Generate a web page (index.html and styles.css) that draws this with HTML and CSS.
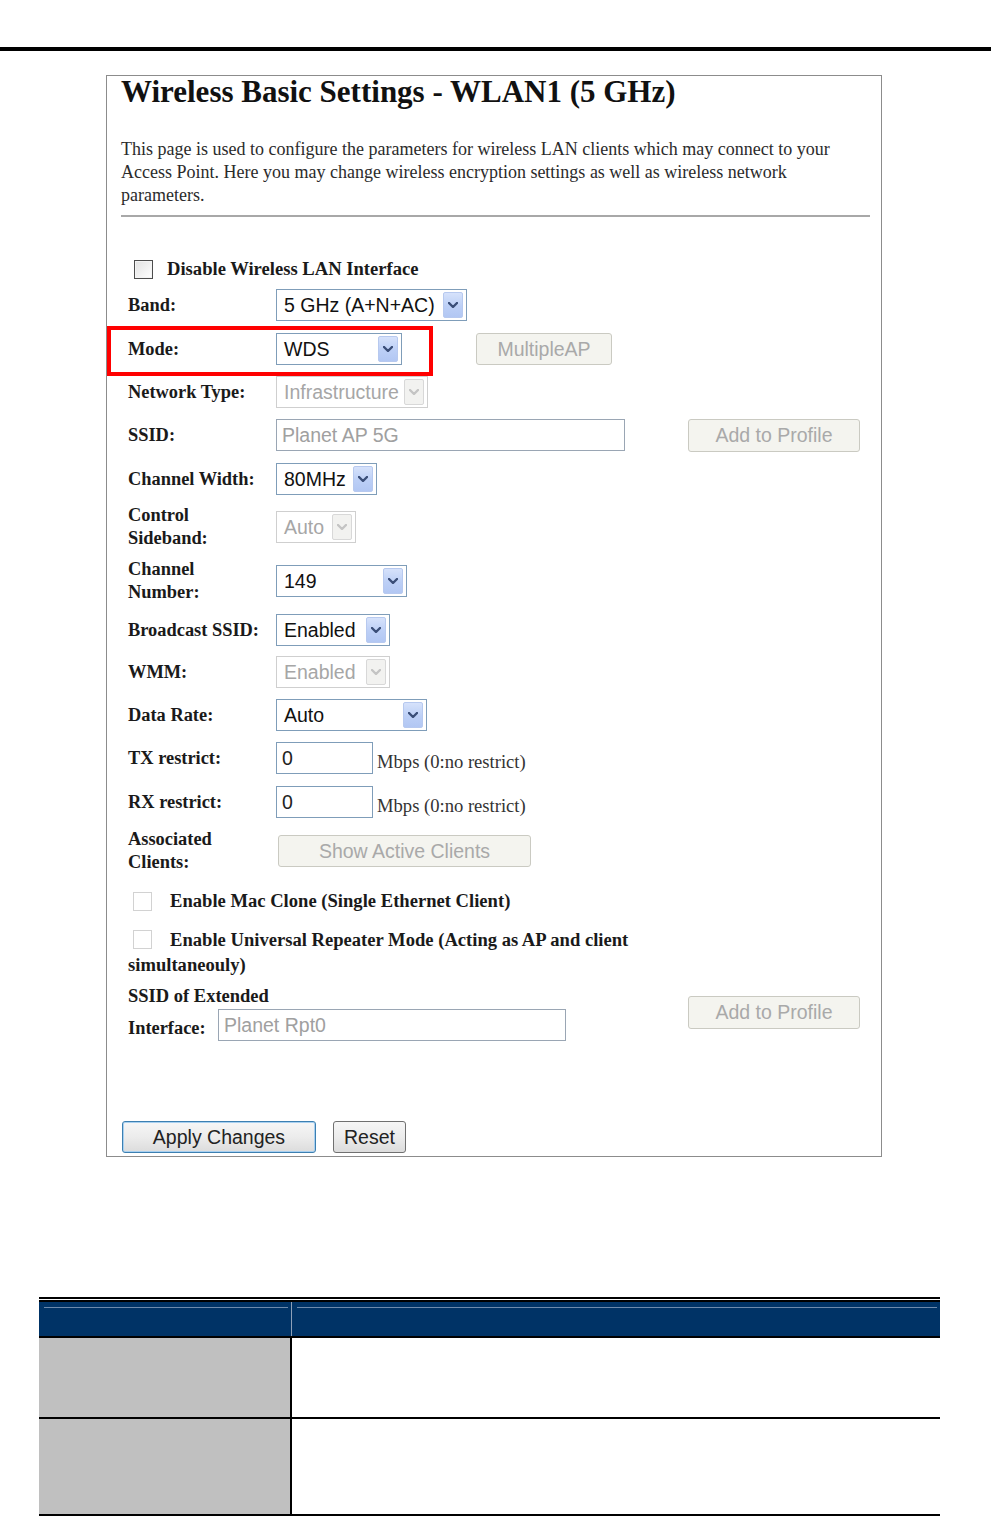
FILE: index.html
```html
<!DOCTYPE html>
<html>
<head>
<meta charset="utf-8">
<link rel="stylesheet" href="styles.css">
</head>
<body>
<div class="top-rule"></div>

<div class="shot">
  <h1 class="title">Wireless Basic Settings - WLAN1 (5 GHz)</h1>
  <p class="intro">This page is used to configure the parameters for wireless LAN clients which may connect to your<br>Access Point. Here you may change wireless encryption settings as well as wireless network<br>parameters.</p>
  <hr class="rule">

  <div class="form">
    <div class="check-row">
      <span class="cb cb-dark"></span>
      <span class="check-label">Disable Wireless LAN Interface</span>
    </div>

    <div class="row h44">
      <div class="lbl">Band:</div>
      <div class="ctl">
        <div class="sel w-band"><span class="sel-text">5 GHz (A+N+AC)</span><span class="sel-btn"><svg viewBox="0 0 10 6" class="chev"><path d="M1 1 L5 5 L9 1"/></svg></span></div>
      </div>
    </div>

    <div class="row h44 mode-row">
      <div class="lbl">Mode:</div>
      <div class="ctl">
        <div class="sel w-mode"><span class="sel-text">WDS</span><span class="sel-btn"><svg viewBox="0 0 10 6" class="chev"><path d="M1 1 L5 5 L9 1"/></svg></span></div>
        <span class="btn btn-off w-multi">MultipleAP</span>
      </div>
      <div class="highlight"></div>
    </div>

    <div class="row h42">
      <div class="lbl">Network Type:</div>
      <div class="ctl">
        <div class="sel sel-off w-net"><span class="sel-text">Infrastructure</span><span class="sel-btn"><svg viewBox="0 0 10 6" class="chev"><path d="M1 1 L5 5 L9 1"/></svg></span></div>
      </div>
    </div>

    <div class="row h44">
      <div class="lbl">SSID:</div>
      <div class="ctl">
        <div class="inp inp-grey w-ssid">Planet AP 5G</div>
      </div>
      <div class="side"><span class="btn btn-off w-add">Add to Profile</span></div>
    </div>

    <div class="row h44">
      <div class="lbl">Channel Width:</div>
      <div class="ctl">
        <div class="sel w-cw"><span class="sel-text">80MHz</span><span class="sel-btn"><svg viewBox="0 0 10 6" class="chev"><path d="M1 1 L5 5 L9 1"/></svg></span></div>
      </div>
    </div>

    <div class="row h52">
      <div class="lbl two">Control<br>Sideband:</div>
      <div class="ctl">
        <div class="sel sel-off w-sb"><span class="sel-text">Auto</span><span class="sel-btn"><svg viewBox="0 0 10 6" class="chev"><path d="M1 1 L5 5 L9 1"/></svg></span></div>
      </div>
    </div>

    <div class="row h56">
      <div class="lbl two">Channel<br>Number:</div>
      <div class="ctl">
        <div class="sel w-cn"><span class="sel-text">149</span><span class="sel-btn"><svg viewBox="0 0 10 6" class="chev"><path d="M1 1 L5 5 L9 1"/></svg></span></div>
      </div>
    </div>

    <div class="row h42">
      <div class="lbl">Broadcast SSID:</div>
      <div class="ctl">
        <div class="sel w-bc"><span class="sel-text">Enabled</span><span class="sel-btn"><svg viewBox="0 0 10 6" class="chev"><path d="M1 1 L5 5 L9 1"/></svg></span></div>
      </div>
    </div>

    <div class="row h42">
      <div class="lbl">WMM:</div>
      <div class="ctl">
        <div class="sel sel-off w-bc"><span class="sel-text">Enabled</span><span class="sel-btn"><svg viewBox="0 0 10 6" class="chev"><path d="M1 1 L5 5 L9 1"/></svg></span></div>
      </div>
    </div>

    <div class="row h44">
      <div class="lbl">Data Rate:</div>
      <div class="ctl">
        <div class="sel w-dr"><span class="sel-text">Auto</span><span class="sel-btn"><svg viewBox="0 0 10 6" class="chev"><path d="M1 1 L5 5 L9 1"/></svg></span></div>
      </div>
    </div>

    <div class="row h42">
      <div class="lbl">TX restrict:</div>
      <div class="ctl ctl-unit">
        <div class="inp w-tx">0</div>
        <span class="unit">Mbps (0:no restrict)</span>
      </div>
    </div>

    <div class="row h46">
      <div class="lbl">RX restrict:</div>
      <div class="ctl ctl-unit">
        <div class="inp w-tx">0</div>
        <span class="unit">Mbps (0:no restrict)</span>
      </div>
    </div>

    <div class="row h52">
      <div class="lbl two">Associated<br>Clients:</div>
      <div class="ctl">
        <span class="btn btn-off w-show">Show Active Clients</span>
      </div>
    </div>

    <div class="check-row mac-row">
      <span class="cb cb-light"></span>
      <span class="check-label">Enable Mac Clone (Single Ethernet Client)</span>
    </div>

    <div class="repeater">
      <span class="cb cb-light cb-inline"></span><span class="check-label">Enable Universal Repeater Mode (Acting as AP and client</span><br><span class="check-label">simultaneouly)</span>
    </div>

    <div class="ext-row">
      <div class="ext-left">
        <div class="ext-title">SSID of Extended</div>
        <div class="ext-line">
          <span class="lbl-inline">Interface:</span>
          <div class="inp inp-grey w-ext">Planet Rpt0</div>
        </div>
      </div>
      <div class="side ext-side"><span class="btn btn-off w-add">Add to Profile</span></div>
    </div>
  </div>

  <div class="actions">
    <span class="btn btn-primary w-apply">Apply Changes</span>
    <span class="btn btn-reset w-reset">Reset</span>
  </div>
</div>

<div class="spec">
  <div class="spec-top"></div>
  <div class="spec-head">
    <div class="hc hc-left"></div>
    <div class="hc hc-right"></div>
  </div>
  <div class="spec-row r1">
    <div class="sc-left"></div>
    <div class="sc-right"></div>
  </div>
  <div class="spec-row r2">
    <div class="sc-left"></div>
    <div class="sc-right"></div>
  </div>
</div>
</body>
</html>
```

FILE: styles.css
```css
html, body {
  margin: 0;
  padding: 0;
  background: #fff;
}

body {
  font-family: "Liberation Serif", "Times New Roman", serif;
  color: #000;
}

.top-rule {
  height: 4px;
  margin-top: 47px;
  background: #000;
}

.shot {
  margin: 24px 0 0 106px;
  width: 776px;
  box-sizing: border-box;
  border: 1px solid #8c8c8c;
  padding: 0 10px 3px 14px;
}

.title {
  margin: 0;
  font-size: 31px;
  line-height: 32px;
  font-weight: bold;
  color: #111;
}

.intro {
  margin: 30px 0 0;
  font-size: 18px;
  line-height: 23px;
  color: #2b2b2b;
}

.rule {
  width: 749px;
  margin: 8px 0 0;
  border: 0;
  border-top: 2px solid #a8a8a8;
  height: 0;
}

.form {
  padding-left: 7px;
}

.check-row {
  display: flex;
  align-items: center;
  height: 34px;
  margin-top: 35px;
}

.cb {
  display: inline-block;
  width: 19px;
  height: 19px;
  box-sizing: border-box;
  flex: none;
}

.cb-dark {
  margin-left: 6px;
  margin-right: 14px;
  border: 1px solid #4d4d4d;
  background: linear-gradient(135deg, #e2e2e2, #ffffff);
  box-shadow: inset 0 0 0 1px #f4f4f4;
}

.cb-light {
  margin-left: 5px;
  margin-right: 18px;
  border: 1px solid #d2d2d2;
  background: #fff;
}

.check-label {
  font-size: 18.6px;
  font-weight: bold;
  color: #1a1a1a;
}

.row {
  position: relative;
  display: grid;
  grid-template-columns: 148px 412px 172px;
  align-items: center;
}

.form > .check-row + .row {
  margin-top: -3px;
}

.h42 { height: 42px; }
.h44 { height: 44px; }
.h46 { height: 46px; }
.h52 { height: 52px; }
.h56 { height: 56px; }

.lbl {
  font-size: 18.4px;
  font-weight: bold;
  color: #1a1a1a;
  line-height: 23px;
}

.ctl {
  display: flex;
  align-items: center;
}

.ctl-unit {
  align-items: flex-end;
}

.unit {
  margin-left: 4px;
  margin-bottom: 1px;
  font-size: 18.6px;
  color: #333;
  line-height: 23px;
}

/* select boxes */
.sel {
  display: flex;
  align-items: center;
  justify-content: space-between;
  height: 32px;
  box-sizing: border-box;
  border: 1px solid #7f9db9;
  padding: 2px 3px 2px 7px;
  background: #fff;
  font-family: "Liberation Sans", Arial, sans-serif;
  font-size: 19.5px;
  color: #111;
  flex: none;
}

.sel-text {
  white-space: nowrap;
}

.sel-btn {
  display: flex;
  align-items: center;
  justify-content: center;
  width: 20px;
  height: 26px;
  box-sizing: border-box;
  border: 1px solid #b7c9ef;
  border-radius: 2px;
  background: linear-gradient(180deg, #d6e2fb 0%, #bccff6 55%, #b2c7f3 100%);
  flex: none;
}

.chev {
  width: 10px;
  height: 6px;
  fill: none;
  stroke: #3a4e78;
  stroke-width: 2.4;
  stroke-linecap: round;
  stroke-linejoin: round;
}

.sel-off {
  border-color: #cfcfcf;
  color: #a6a6a6;
}

.sel-off .sel-btn {
  border-color: #d8d8d8;
  background: #f2f2f0;
}

.sel-off .chev {
  stroke: #c4c4c4;
}

.w-band { width: 191px; }
.w-mode { width: 126px; }
.w-net { width: 152px; }
.w-cw { width: 101px; }
.w-sb { width: 80px; }
.w-cn { width: 131px; }
.w-bc { width: 114px; }
.w-dr { width: 151px; }

/* text inputs */
.inp {
  height: 32px;
  box-sizing: border-box;
  border: 1px solid #7f9db9;
  padding: 0 5px;
  display: flex;
  align-items: center;
  background: #fff;
  font-family: "Liberation Sans", Arial, sans-serif;
  font-size: 19.5px;
  color: #222;
  flex: none;
}

.inp-grey {
  color: #a0a0a0;
  border-color: #9aa6b4;
}

.w-ssid { width: 349px; }
.w-tx { width: 97px; }
.w-ext { width: 348px; }

/* buttons */
.btn {
  display: inline-flex;
  align-items: center;
  justify-content: center;
  height: 32px;
  box-sizing: border-box;
  border-radius: 3px;
  font-family: "Liberation Sans", Arial, sans-serif;
  font-size: 19.5px;
  flex: none;
}

.btn-off {
  border: 1px solid #cacac2;
  background: #f4f4ef;
  color: #a9a9a9;
}

.w-multi { width: 136px; margin-left: 74px; }
.w-add { width: 172px; height: 33px; }
.w-show { width: 253px; margin-left: 2px; }

.side {
  display: flex;
}

.mode-row .highlight {
  position: absolute;
  left: -21px;
  top: -1px;
  width: 326px;
  height: 50px;
  box-sizing: border-box;
  border: 4px solid #ff0000;
  pointer-events: none;
}

.mac-row {
  height: 42px;
  margin-top: 3px;
}

.repeater {
  margin-top: 6px;
  line-height: 24px;
}

.cb-inline {
  vertical-align: -3px;
}

.ext-row {
  display: grid;
  grid-template-columns: 560px 172px;
  margin-top: 6px;
}

.ext-title {
  font-size: 18.5px;
  font-weight: bold;
  color: #1a1a1a;
  line-height: 24px;
}

.ext-line {
  display: flex;
  align-items: center;
  height: 32px;
  margin-top: 1px;
}

.lbl-inline {
  font-size: 18.4px;
  font-weight: bold;
  color: #1a1a1a;
  width: 90px;
  flex: none;
  padding-top: 7px;
}

.ext-side {
  margin-top: 12px;
  align-self: start;
}

.actions {
  display: flex;
  gap: 17px;
  margin-top: 80px;
  padding-left: 1px;
}

.btn-primary {
  border: 1px solid #3c7fb1;
  box-shadow: inset 0 0 0 1px #a8d0f0;
  background: linear-gradient(180deg, #f6f6f6 0%, #ececec 50%, #dcdcdc 100%);
  color: #222;
}

.btn-reset {
  border: 1px solid #707070;
  background: linear-gradient(180deg, #f6f6f6 0%, #ececec 50%, #dcdcdc 100%);
  color: #222;
}

.w-apply { width: 194px; }
.w-reset { width: 73px; }

/* bottom spec table */
.spec {
  width: 901px;
  margin: 140px 0 0 39px;
}

.spec-top {
  height: 1px;
  border-top: 2px solid #000;
  border-bottom: 2px solid #000;
}

.spec-head {
  display: grid;
  grid-template-columns: 253px 648px;
  height: 34px;
  background: #003366;
  border-bottom: 2px solid #000;
}

.hc-left {
  border-right: 1px solid #8da0b8;
}

.hc::before {
  content: "";
  display: block;
  height: 1px;
  margin: 5px 3px 0 5px;
  background: #6e8bad;
}

.spec-row {
  display: grid;
  grid-template-columns: 253px 648px;
  border-bottom: 2px solid #000;
}

.r1 { height: 79px; }
.r2 { height: 95px; }

.sc-left {
  background: #c0c0c0;
  border-right: 2px solid #000;
}

.sc-right {
  background: #fff;
}
```
